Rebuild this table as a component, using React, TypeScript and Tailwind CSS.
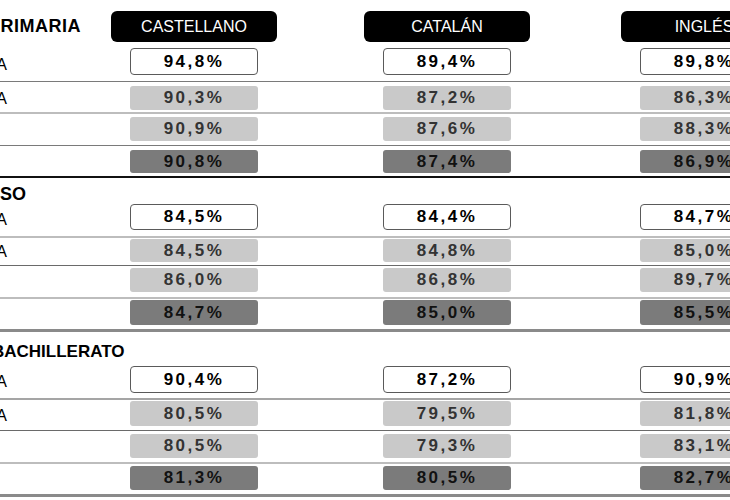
import React from "react";

type Variant = "white" | "light" | "dark";

type RowSpec = {
    label?: string;
    variant: Variant;
    values: string[];
    rowClass: string;
    boxClass: string;
};

const boxStyles: Record<Variant, string> = {
    white: "bg-white border border-[#5a5a5a] rounded-[4px] text-black font-bold",
    light: "bg-[#c9c9c9] rounded-[3px] text-[#333] font-semibold",
    dark: "bg-[#7b7b7b] rounded-[3px] text-[#111] font-bold",
};

const cols = "grid grid-cols-[111px_253px_257px_255px]";

function DataRow({ row }: { row: RowSpec }) {
    return (
        <div className={`${cols} ${row.rowClass}`}>
            {/* label, only its tail is visible at the left edge */}
            <div className="flex justify-end items-center w-[7px] whitespace-nowrap text-[16px] text-black">
                {row.label}
            </div>
            {row.values.map((v, i) => (
                <div key={i} className="flex">
                    <div
                        className={`ml-[19px] w-[128px] flex items-center justify-center text-[17px] tracking-[2.5px] ${boxStyles[row.variant]} ${row.boxClass}`}
                    >
                        {v}%
                    </div>
                </div>
            ))}
        </div>
    );
}

const sections: { heading: string; headClass: string; rows: RowSpec[] }[] = [
    {
        heading: "PRIMARIA",
        headClass: "",
        rows: [
            { label: "NOTA MEDIA", variant: "white", values: ["94,8", "89,4", "89,8"], rowClass: "h-[35px] pt-[1px] border-b border-[#7a7a7a]", boxClass: "h-[27px]" },
            { label: "NOTA PRUEBA", variant: "light", values: ["90,3", "87,2", "86,3"], rowClass: "h-[32px] pt-[4px] border-b-2 border-[#bdbdbd]", boxClass: "h-[24px]" },
            { variant: "light", values: ["90,9", "87,6", "88,3"], rowClass: "h-[32px] pt-[3px] border-b border-[#7a7a7a]", boxClass: "h-[24px]" },
            { variant: "dark", values: ["90,8", "87,4", "86,9"], rowClass: "h-[32px] pt-[4px] border-b-2 border-[#111]", boxClass: "h-[23px]" },
        ],
    },
    {
        heading: "ESO",
        headClass: "h-[25px] pt-[5px]",
        rows: [
            { label: "NOTA MEDIA", variant: "white", values: ["84,5", "84,4", "84,7"], rowClass: "h-[35px] pt-[1px] border-b-2 border-[#bdbdbd]", boxClass: "h-[26px]" },
            { label: "NOTA PRUEBA", variant: "light", values: ["84,5", "84,8", "85,0"], rowClass: "h-[28px] pt-[1px] border-b border-[#6a6a6a]", boxClass: "h-[23px]" },
            { variant: "light", values: ["86,0", "86,8", "89,7"], rowClass: "h-[33px] pt-[2px] border-b-2 border-[#bdbdbd]", boxClass: "h-[24px]" },
            { variant: "dark", values: ["84,7", "85,0", "85,5"], rowClass: "h-[33px] pt-[1px] border-b-[3px] border-[#8a8a8a]", boxClass: "h-[25px]" },
        ],
    },
    {
        heading: "BACHILLERATO",
        headClass: "h-[31px] pt-[9px]",
        rows: [
            { label: "NOTA MEDIA", variant: "white", values: ["90,4", "87,2", "90,9"], rowClass: "h-[37px] pt-[3px] border-b-2 border-[#a5a5a5]", boxClass: "h-[27px]" },
            { label: "NOTA PRUEBA", variant: "light", values: ["80,5", "79,5", "81,8"], rowClass: "h-[31px] pt-[1px] border-b border-[#6a6a6a]", boxClass: "h-[25px]" },
            { variant: "light", values: ["80,5", "79,3", "83,1"], rowClass: "h-[33px] pt-[3px] border-b-2 border-[#bdbdbd]", boxClass: "h-[24px]" },
            { variant: "dark", values: ["81,3", "80,5", "82,7"], rowClass: "h-[33px] pt-[2px] border-b-[3px] border-[#8a8a8a]", boxClass: "h-[24px]" },
        ],
    },
];

export default function App() {
    return (
        <div className="w-[730px] h-[500px] overflow-hidden bg-white font-['Liberation_Sans',Arial,sans-serif]">
            {sections.map((s, si) => (
                <div key={s.heading}>
                    {si === 0 ? (
                        // header row with language pills
                        <div className={`${cols} h-[47px] pt-[11px]`}>
                            <div className="-ml-[12px] whitespace-nowrap text-[18px] font-bold text-black tracking-[0.5px] leading-[31px]">
                                {s.heading}
                            </div>
                            {["CASTELLANO", "CATALÁN", "INGLÉS"].map((lang) => (
                                <div key={lang}>
                                    <div className="w-[166px] h-[31px] bg-black rounded-[6px] text-white text-[16px] flex items-center justify-center">
                                        {lang}
                                    </div>
                                </div>
                            ))}
                        </div>
                    ) : (
                        <div className={s.headClass}>
                            <div className={`whitespace-nowrap font-bold text-black leading-[22px] ${si === 1 ? "-ml-[12px] text-[18px]" : "-ml-[8px] text-[17px]"}`}>
                                {s.heading}
                            </div>
                        </div>
                    )}
                    {s.rows.map((r, ri) => (
                        <DataRow key={ri} row={r} />
                    ))}
                </div>
            ))}
        </div>
    );
}
